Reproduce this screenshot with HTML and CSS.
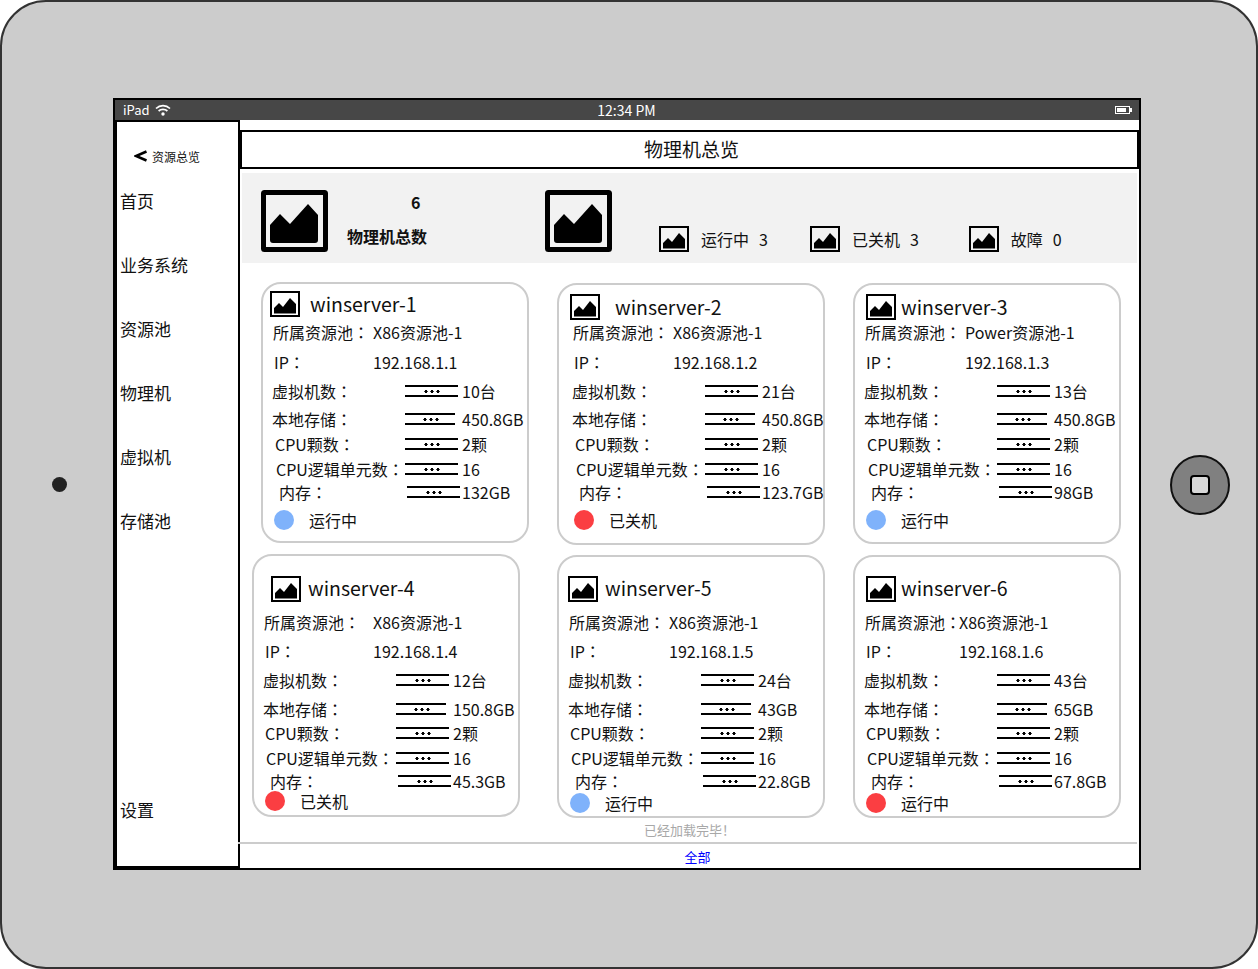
FILE: index.html
```html
<!DOCTYPE html>
<html lang="zh-CN">
<head>
    <meta charset="UTF-8">
    <title>物理机总览</title>
    <link rel="stylesheet" href="styles.css">
</head>
<body>
    <svg class="defs" width="0" height="0">
        <symbol id="img-big" viewBox="0 0 68 62">
            <rect x="2.5" y="2.5" width="62" height="57" rx="1" fill="none" stroke="#000" stroke-width="5"/>
            <path d="M9 35 L19 24 L29 34 L47 14 L57 25 V50 Q57 53 54 53 H12 Q9 53 9 50 Z"/>
        </symbol>
        <symbol id="img-small" viewBox="0 0 30 26">
            <rect x="1" y="1" width="28" height="24" fill="none" stroke="#000" stroke-width="2"/>
            <path d="M4 17 L9 12 L13 16 L20 7 L26 13 V22.5 H4 Z"/>
        </symbol>
    </svg>

    <div class="device">
        <div class="camera"></div>

        <div class="screen">
            <div class="statusbar">
                <div class="status-left">
                    <span>iPad</span>
                    <svg class="wifi" viewBox="0 0 16 12" width="16" height="12">
                        <path d="M1 4.5 C5 0.7 11 0.7 15 4.5" fill="none" stroke="#fff" stroke-width="1.7"/>
                        <path d="M3.6 7 C6 4.9 10 4.9 12.4 7" fill="none" stroke="#fff" stroke-width="1.7"/>
                        <circle cx="8" cy="10" r="1.7" fill="#fff"/>
                    </svg>
                </div>
                <div class="status-time">12:34 PM</div>
                <div class="battery"><i></i></div>
            </div>

            <div class="app">
                <div class="sidebar">
                    <div class="back">
                        <svg viewBox="0 0 13 12" width="13" height="12">
                            <path d="M12.5 1.5 L2 6 L12.5 10.5" fill="none" stroke="#000" stroke-width="2.6"/>
                        </svg>
                        <span>资源总览</span>
                    </div>
                    <div class="nav-item">首页</div>
                    <div class="nav-item">业务系统</div>
                    <div class="nav-item">资源池</div>
                    <div class="nav-item">物理机</div>
                    <div class="nav-item">虚拟机</div>
                    <div class="nav-item">存储池</div>
                    <div class="nav-item nav-bottom">设置</div>
                </div>

                <div class="main">
                    <div class="title">物理机总览</div>

                    <div class="summary">
                        <svg class="icon-big"><use href="#img-big"/></svg>
                        <div class="total">
                            <div class="total-num">6</div>
                            <div class="total-label">物理机总数</div>
                        </div>
                        <svg class="icon-big"><use href="#img-big"/></svg>
                        <div class="stat stat-run">
                            <svg class="icon-small"><use href="#img-small"/></svg>
                            <span class="stat-label">运行中</span><span>3</span>
                        </div>
                        <div class="stat stat-off">
                            <svg class="icon-small"><use href="#img-small"/></svg>
                            <span class="stat-label">已关机</span><span>3</span>
                        </div>
                        <div class="stat stat-bad">
                            <svg class="icon-small"><use href="#img-small"/></svg>
                            <span class="stat-label">故障</span><span>0</span>
                        </div>
                    </div>

                    <div class="cards">
                        <div class="card card-1">
                            <div class="card-head">
                                <svg class="icon-small"><use href="#img-small"/></svg>
                                <span class="name">winserver-1</span>
                            </div>
                            <div class="row row-pool"><span class="info">所属资源池：</span><span>X86资源池-1</span></div>
                            <div class="row row-ip"><span class="info">IP：</span><span>192.168.1.1</span></div>
                            <div class="row row-vm"><span class="label">虚拟机数：</span><i class="sep"><b></b></i><span class="val">10台</span></div>
                            <div class="row row-disk"><span class="label">本地存储：</span><i class="sep"><b></b></i><span class="val">450.8GB</span></div>
                            <div class="row row-cpu"><span class="label">CPU颗数：</span><i class="sep"><b></b></i><span class="val">2颗</span></div>
                            <div class="row row-logic"><span class="label">CPU逻辑单元数：</span><i class="sep"><b></b></i><span class="val">16</span></div>
                            <div class="row row-mem"><span class="label">内存：</span><i class="sep"><b></b></i><span class="val">132GB</span></div>
                            <div class="row row-state"><i class="dot dot-on"></i><span>运行中</span></div>
                        </div>

                        <div class="card card-2">
                            <div class="card-head">
                                <svg class="icon-small"><use href="#img-small"/></svg>
                                <span class="name">winserver-2</span>
                            </div>
                            <div class="row row-pool"><span class="info">所属资源池：</span><span>X86资源池-1</span></div>
                            <div class="row row-ip"><span class="info">IP：</span><span>192.168.1.2</span></div>
                            <div class="row row-vm"><span class="label">虚拟机数：</span><i class="sep"><b></b></i><span class="val">21台</span></div>
                            <div class="row row-disk"><span class="label">本地存储：</span><i class="sep"><b></b></i><span class="val">450.8GB</span></div>
                            <div class="row row-cpu"><span class="label">CPU颗数：</span><i class="sep"><b></b></i><span class="val">2颗</span></div>
                            <div class="row row-logic"><span class="label">CPU逻辑单元数：</span><i class="sep"><b></b></i><span class="val">16</span></div>
                            <div class="row row-mem"><span class="label">内存：</span><i class="sep"><b></b></i><span class="val">123.7GB</span></div>
                            <div class="row row-state"><i class="dot dot-off"></i><span>已关机</span></div>
                        </div>

                        <div class="card card-3">
                            <div class="card-head">
                                <svg class="icon-small"><use href="#img-small"/></svg>
                                <span class="name">winserver-3</span>
                            </div>
                            <div class="row row-pool"><span class="info">所属资源池：</span><span>Power资源池-1</span></div>
                            <div class="row row-ip"><span class="info">IP：</span><span>192.168.1.3</span></div>
                            <div class="row row-vm"><span class="label">虚拟机数：</span><i class="sep"><b></b></i><span class="val">13台</span></div>
                            <div class="row row-disk"><span class="label">本地存储：</span><i class="sep"><b></b></i><span class="val">450.8GB</span></div>
                            <div class="row row-cpu"><span class="label">CPU颗数：</span><i class="sep"><b></b></i><span class="val">2颗</span></div>
                            <div class="row row-logic"><span class="label">CPU逻辑单元数：</span><i class="sep"><b></b></i><span class="val">16</span></div>
                            <div class="row row-mem"><span class="label">内存：</span><i class="sep"><b></b></i><span class="val">98GB</span></div>
                            <div class="row row-state"><i class="dot dot-on"></i><span>运行中</span></div>
                        </div>

                        <div class="card card-4">
                            <div class="card-head">
                                <svg class="icon-small"><use href="#img-small"/></svg>
                                <span class="name">winserver-4</span>
                            </div>
                            <div class="row row-pool"><span class="info">所属资源池：</span><span>X86资源池-1</span></div>
                            <div class="row row-ip"><span class="info">IP：</span><span>192.168.1.4</span></div>
                            <div class="row row-vm"><span class="label">虚拟机数：</span><i class="sep"><b></b></i><span class="val">12台</span></div>
                            <div class="row row-disk"><span class="label">本地存储：</span><i class="sep"><b></b></i><span class="val">150.8GB</span></div>
                            <div class="row row-cpu"><span class="label">CPU颗数：</span><i class="sep"><b></b></i><span class="val">2颗</span></div>
                            <div class="row row-logic"><span class="label">CPU逻辑单元数：</span><i class="sep"><b></b></i><span class="val">16</span></div>
                            <div class="row row-mem"><span class="label">内存：</span><i class="sep"><b></b></i><span class="val">45.3GB</span></div>
                            <div class="row row-state"><i class="dot dot-off"></i><span>已关机</span></div>
                        </div>

                        <div class="card card-5">
                            <div class="card-head">
                                <svg class="icon-small"><use href="#img-small"/></svg>
                                <span class="name">winserver-5</span>
                            </div>
                            <div class="row row-pool"><span class="info">所属资源池：</span><span>X86资源池-1</span></div>
                            <div class="row row-ip"><span class="info">IP：</span><span>192.168.1.5</span></div>
                            <div class="row row-vm"><span class="label">虚拟机数：</span><i class="sep"><b></b></i><span class="val">24台</span></div>
                            <div class="row row-disk"><span class="label">本地存储：</span><i class="sep"><b></b></i><span class="val">43GB</span></div>
                            <div class="row row-cpu"><span class="label">CPU颗数：</span><i class="sep"><b></b></i><span class="val">2颗</span></div>
                            <div class="row row-logic"><span class="label">CPU逻辑单元数：</span><i class="sep"><b></b></i><span class="val">16</span></div>
                            <div class="row row-mem"><span class="label">内存：</span><i class="sep"><b></b></i><span class="val">22.8GB</span></div>
                            <div class="row row-state"><i class="dot dot-on"></i><span>运行中</span></div>
                        </div>

                        <div class="card card-6">
                            <div class="card-head">
                                <svg class="icon-small"><use href="#img-small"/></svg>
                                <span class="name">winserver-6</span>
                            </div>
                            <div class="row row-pool"><span class="info">所属资源池：</span><span>X86资源池-1</span></div>
                            <div class="row row-ip"><span class="info">IP：</span><span>192.168.1.6</span></div>
                            <div class="row row-vm"><span class="label">虚拟机数：</span><i class="sep"><b></b></i><span class="val">43台</span></div>
                            <div class="row row-disk"><span class="label">本地存储：</span><i class="sep"><b></b></i><span class="val">65GB</span></div>
                            <div class="row row-cpu"><span class="label">CPU颗数：</span><i class="sep"><b></b></i><span class="val">2颗</span></div>
                            <div class="row row-logic"><span class="label">CPU逻辑单元数：</span><i class="sep"><b></b></i><span class="val">16</span></div>
                            <div class="row row-mem"><span class="label">内存：</span><i class="sep"><b></b></i><span class="val">67.8GB</span></div>
                            <div class="row row-state"><i class="dot dot-off"></i><span>运行中</span></div>
                        </div>
                    </div>

                    <div class="loaded">已经加载完毕！</div>
                    <div class="tabbar"><a class="tab-all">全部</a></div>
                </div>
            </div>
        </div>

        <div class="home"><i></i></div>
    </div>
</body>
</html>
```

FILE: styles.css
```css
*{
    box-sizing: border-box;
}
html,body{
    margin: 0;
    background-color: #ffffff;
}
body{
    font-family: "Noto Sans CJK SC", "Noto Sans", sans-serif;
    font-size: 16px;
    color: #111111;
}
.defs{
    display: block;
    height: 0;
}
.device{
    width: 1258px;
    height: 969px;
    display: grid;
    grid-template-columns: 111px 1028px 115px;
    grid-template-rows: 96px 772px 97px;
    background-color: #cccccc;
    border: 2px solid #333333;
    border-radius: 46px;
}
.camera{
    grid-column: 1;
    grid-row: 2;
    align-self: center;
    justify-self: center;
    width: 15px;
    height: 15px;
    margin-left: 3px;
    border-radius: 50%;
    background-color: #222222;
}
.home{
    grid-column: 3;
    grid-row: 2;
    align-self: center;
    justify-self: center;
    width: 60px;
    height: 60px;
    margin-top: 2px;
    margin-left: 3px;
    border: 2px solid #111111;
    border-radius: 50%;
    background-color: #808080;
    display: flex;
    align-items: center;
    justify-content: center;
}
.home i{
    width: 20px;
    height: 20px;
    border: 2px solid #000000;
    border-radius: 4px;
    background-color: #d8d8d8;
}
.screen{
    grid-column: 2;
    grid-row: 2;
    border: 2px solid #000000;
    background-color: #ffffff;
    display: flex;
    flex-direction: column;
}

/* status bar */
.statusbar{
    height: 20px;
    flex: none;
    background-color: #474747;
    color: #ffffff;
    font-size: 13px;
    line-height: 20px;
    display: grid;
    grid-template-columns: 1fr auto 1fr;
    align-items: center;
    padding: 0 9px 0 8px;
}
.status-left{
    display: flex;
    align-items: center;
    gap: 5px;
}
.status-time{
    font-size: 14px;
}
.battery{
    justify-self: end;
    position: relative;
    width: 15px;
    height: 8px;
    border: 1px solid #ffffff;
    padding: 1px;
}
.battery i{
    display: block;
    width: 9px;
    height: 4px;
    background-color: #ffffff;
}
.battery::after{
    content: "";
    position: absolute;
    right: -3px;
    top: 1px;
    width: 2px;
    height: 4px;
    background-color: #ffffff;
}

.app{
    flex: 1;
    display: flex;
    min-height: 0;
}

/* sidebar */
.sidebar{
    width: 125px;
    flex: none;
    border: 2px solid #000000;
    padding: 24px 0 46px 3px;
    display: flex;
    flex-direction: column;
}
.back{
    height: 20px;
    margin-bottom: 25px;
    padding-left: 14px;
    display: flex;
    align-items: center;
    gap: 5px;
    font-size: 12px;
}
.nav-item{
    height: 20px;
    font-size: 17px;
    line-height: 20px;
    margin-bottom: 44px;
    white-space: nowrap;
}
.nav-bottom{
    margin-top: auto;
    margin-bottom: 0;
}

/* main */
.main{
    flex: 1;
    min-width: 0;
    display: flex;
    flex-direction: column;
}
.title{
    height: 39px;
    flex: none;
    margin-top: 10px;
    border: 2px solid #000000;
    font-size: 19px;
    line-height: 33px;
    text-align: center;
    padding-left: 4px;
}
.summary{
    height: 90px;
    flex: none;
    margin: 4px 2px 0;
    padding: 17px 0 0 19px;
    background-color: #f2f2f2;
    display: flex;
    align-items: flex-start;
}
.icon-big{
    width: 68px;
    height: 62px;
    flex: none;
}
.icon-small{
    width: 30px;
    height: 26px;
    flex: none;
}
.total{
    width: 216px;
    flex: none;
    padding-left: 18px;
    font-weight: 700;
}
.total-num{
    height: 20px;
    line-height: 20px;
    margin-top: 2px;
    padding-left: 64px;
}
.total-label{
    height: 20px;
    line-height: 20px;
    margin-top: 14px;
    white-space: nowrap;
}
.stat{
    display: flex;
    align-items: center;
    margin-top: 36px;
    height: 26px;
}
.stat-label{
    margin-left: 12px;
    margin-right: 10px;
}
.stat-run{
    margin-left: 46px;
}
.stat-off{
    margin-left: 42px;
}
.stat-bad{
    margin-left: 50px;
}

/* cards */
.cards{
    height: 538px;
    flex: none;
    margin: 19px 0 0 12px;
    display: grid;
    grid-template-columns: 305px 296px 268px;
    grid-template-rows: 272px 266px;
}
.card{
    --info: 101px;
    width: 268px;
    border: 2px solid #cccccc;
    border-radius: 20px;
    background-color: #ffffff;
    padding-left: 9px;
    white-space: nowrap;
}
.card-head{
    display: flex;
    align-items: center;
    height: 26px;
}
.name{
    font-size: 19.5px;
    line-height: 26px;
}
.card-1{
    margin-left: 9px;
    height: 261px;
}
.card-1 .card-head{
    margin-top: 7px;
    margin-bottom: 5px;
    margin-left: -2px;
    gap: 10px;
}
.card-2{
    margin-top: 1px;
    height: 262px;
    padding-left: 13px;
}
.card-2 .card-head{
    margin-top: 9px;
    margin-bottom: 2px;
    margin-left: -2px;
    gap: 15px;
}
.card-3{
    margin-top: 1px;
    height: 261px;
}
.card-3 .card-head{
    margin-top: 9px;
    margin-bottom: 2px;
    margin-left: 2px;
    gap: 5px;
}
.card-4{
    --info: 110px;
    height: 263px;
}
.card-4 .card-head{
    margin-top: 20px;
    margin-bottom: 10px;
    margin-left: 8px;
    gap: 7px;
}
.card-5{
    margin-top: 1px;
    height: 263px;
}
.card-5 .card-head{
    margin-top: 19px;
    margin-bottom: 10px;
    gap: 7px;
}
.card-6{
    --info: 95px;
    margin-top: 1px;
    height: 263px;
}
.card-6 .card-head{
    margin-top: 19px;
    margin-bottom: 10px;
    margin-left: 2px;
    gap: 5px;
}
.card-4 .name,
.card-5 .name,
.card-6 .name{
    padding-bottom: 2px;
}

/* rows, top band of cards */
.row{
    height: 20px;
    line-height: 20px;
    display: flex;
    align-items: center;
}
.info,
.label{
    font-family: "Noto Sans CJK TC", "Noto Sans CJK SC", sans-serif;
    font-feature-settings: "locl" 0;
    flex: none;
}
.label{
    width: 133px;
}
.row-pool .info{
    width: calc(var(--info) - 1px);
}
.row-ip .info{
    width: calc(var(--info) - 2px);
}
.sep{
    width: 53px;
    height: 12px;
    flex: none;
    border-top: 2px solid #000000;
    border-bottom: 2px solid #000000;
    display: flex;
    align-items: center;
    justify-content: center;
}
.sep b{
    width: 17px;
    height: 3px;
    background: radial-gradient(circle, #000000 1.4px, transparent 1.8px) 0 0 / 6px 3px repeat-x;
}
.val{
    margin-left: 4px;
}
.row-pool{
    padding-left: 1px;
}
.row-ip{
    margin-top: 10px;
    padding-left: 2px;
}
.row-vm{
    margin-top: 9px;
}
.row-disk{
    margin-top: 8px;
}
.row-disk .sep{
    width: 50px;
}
.row-disk .val{
    margin-left: 7px;
}
.row-cpu{
    margin-top: 5px;
}
.row-cpu .label{
    padding-left: 3px;
}
.row-logic{
    margin-top: 5px;
}
.row-logic .label{
    padding-left: 4px;
}
.row-mem{
    margin-top: 3px;
}
.row-mem .label{
    width: 135px;
    padding-left: 7px;
}
.row-mem .val{
    margin-left: 2px;
}
.row-state{
    margin-top: 8px;
    padding-left: 2px;
}
.dot{
    width: 20px;
    height: 20px;
    flex: none;
    margin-right: 15px;
    border-radius: 50%;
}
.dot-on{
    background-color: #7fb2fb;
}
.dot-off{
    background-color: #fb3e42;
}

/* rows, bottom band of cards */
.card-4 .row-ip,
.card-5 .row-ip,
.card-6 .row-ip,
.card-4 .row-vm,
.card-5 .row-vm,
.card-6 .row-vm,
.card-4 .row-disk,
.card-5 .row-disk,
.card-6 .row-disk{
    margin-top: 9px;
}
.card-4 .row-cpu,
.card-5 .row-cpu,
.card-6 .row-cpu{
    margin-top: 4px;
}
.card-4 .row-cpu .label,
.card-5 .row-cpu .label,
.card-6 .row-cpu .label{
    padding-left: 2px;
}
.card-4 .row-logic .label,
.card-5 .row-logic .label,
.card-6 .row-logic .label{
    padding-left: 3px;
}
.card-4 .row-state{
    margin-top: 0;
}
.card-5 .row-state,
.card-6 .row-state{
    margin-top: 2px;
}

/* bottom */
.loaded{
    height: 22px;
    flex: none;
    font-size: 13px;
    line-height: 19px;
    color: #a8a8a8;
    text-align: center;
}
.tabbar{
    flex: 1;
    margin-left: -2px;
    margin-right: 2px;
    border-top: 2px solid #cccccc;
    position: relative;
    font-size: 13px;
    line-height: 26px;
    text-align: center;
    padding-left: 20px;
}
.tab-all{
    color: #0000ff;
}
```
